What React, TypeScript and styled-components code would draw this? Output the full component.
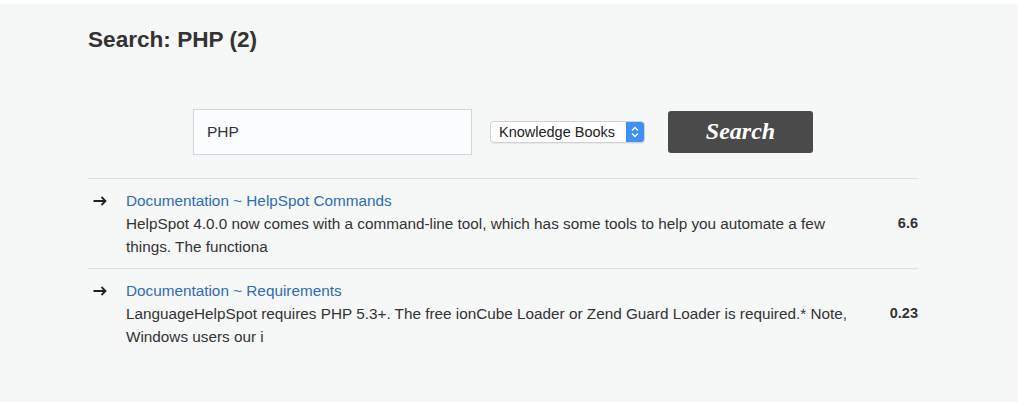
import React from 'react';
import styled, { createGlobalStyle } from 'styled-components';

const GlobalStyle = createGlobalStyle`
  html, body {
    margin: 0;
    padding: 0;
    background: #ffffff;
  }
  body {
    font-family: "Liberation Sans", Arial, Helvetica, sans-serif;
    color: #333333;
  }
`;

const Panel = styled.div`
  margin-top: 4px;
  width: 1018px;
  height: 398px;
  box-sizing: border-box;
  padding: 23px 0 0 88px;
  background: #f6f7f7;
`;

const Heading = styled.h1`
  margin: 0;
  font-size: 22.6px;
  line-height: 26px;
  font-weight: bold;
  color: #333333;
`;

const SearchRow = styled.form`
  display: flex;
  align-items: center;
  height: 46px;
  margin: 56px 0 0 105px;
`;

const SearchInput = styled.div`
  width: 279px;
  height: 46px;
  box-sizing: border-box;
  border: 1px solid #d3d6d8;
  background: #fafcfd;
  padding-left: 13px;
  display: flex;
  align-items: center;
  font-size: 15.5px;
  color: #333333;
`;

const Select = styled.div`
  margin-left: 18px;
  width: 155px;
  height: 22px;
  box-sizing: border-box;
  display: flex;
  align-items: stretch;
  border: 1px solid #cfd1d3;
  border-radius: 4px;
  background: #ffffff;
  overflow: hidden;
  box-shadow: 0 1px 1px rgba(0, 0, 0, 0.06);
`;

const SelectLabel = styled.span`
  flex: 1;
  padding-left: 8px;
  display: flex;
  align-items: center;
  font-size: 14.5px;
  color: #222222;
`;

const Stepper = styled.span`
  width: 18px;
  background: #3f8ff6;
  display: flex;
  align-items: center;
  justify-content: center;
`;

const SearchButton = styled.button`
  margin-left: 23px;
  width: 145px;
  height: 42px;
  border: none;
  border-radius: 3px;
  background: #4a4a4a;
  color: #ffffff;
  font-family: "Liberation Serif", Georgia, serif;
  font-style: italic;
  font-weight: bold;
  font-size: 24px;
  padding: 0 0 2px 0;
  cursor: pointer;
`;

const Results = styled.ul`
  list-style: none;
  margin: 23px 0 0 0;
  padding: 0;
  width: 830px;
  border-top: 1px solid #dfe1e1;
`;

const Result = styled.li<{ $last?: boolean }>`
  display: grid;
  grid-template-columns: 38px 730px 1fr;
  padding: 10px 0 10px 0;
  font-size: 15.3px;
  line-height: 23px;
  border-bottom: ${({ $last }) => ($last ? 'none' : '1px solid #dfe1e1')};
`;

const Arrow = styled.span`
  grid-row: 1;
  grid-column: 1;
  display: flex;
  align-items: center;
  padding-left: 5px;
`;

const Title = styled.a`
  grid-row: 1;
  grid-column: 2;
  color: #2f6db3;
  text-decoration: none;
`;

const Snippet = styled.p`
  grid-row: 2;
  grid-column: 2;
  margin: 0;
  color: #333333;
`;

const Score = styled.span`
  grid-row: 2;
  grid-column: 3;
  justify-self: end;
  font-weight: bold;
  font-size: 14.5px;
  color: #333333;
`;

const ArrowIcon = () => (
  <svg width="14" height="10" viewBox="0 0 14 10">
    <path d="M0.5 5 H12.5 M8.5 1 L12.5 5 L8.5 9" fill="none" stroke="#222" strokeWidth="1.8" />
  </svg>
);

const StepperIcon = () => (
  <svg width="8" height="12" viewBox="0 0 8 12">
    <path d="M1 4.5 L4 1.5 L7 4.5 M1 7.5 L4 10.5 L7 7.5" fill="none" stroke="#fff" strokeWidth="1.4" />
  </svg>
);

const results = [
  {
    title: 'Documentation ~ HelpSpot Commands',
    snippet:
      'HelpSpot 4.0.0 now comes with a command-line tool, which has some tools to help you automate a few things. The functiona',
    score: '6.6',
  },
  {
    title: 'Documentation ~ Requirements',
    snippet:
      'LanguageHelpSpot requires PHP 5.3+. The free ionCube Loader or Zend Guard Loader is required.* Note, Windows users our i',
    score: '0.23',
  },
];

const App: React.FunctionComponent = () => (
  <>
    <GlobalStyle />
    <Panel>
      <Heading>Search: PHP (2)</Heading>
      <SearchRow onSubmit={(e) => e.preventDefault()}>
        <SearchInput>PHP</SearchInput>
        <Select>
          <SelectLabel>Knowledge Books</SelectLabel>
          <Stepper>
            <StepperIcon />
          </Stepper>
        </Select>
        <SearchButton type="submit">Search</SearchButton>
      </SearchRow>
      <Results>
        {results.map((r, i) => (
          <Result key={r.title} $last={i === results.length - 1}>
            <Arrow>
              <ArrowIcon />
            </Arrow>
            <Title href="#">{r.title}</Title>
            <Snippet>{r.snippet}</Snippet>
            <Score>{r.score}</Score>
          </Result>
        ))}
      </Results>
    </Panel>
  </>
);

export default App;
